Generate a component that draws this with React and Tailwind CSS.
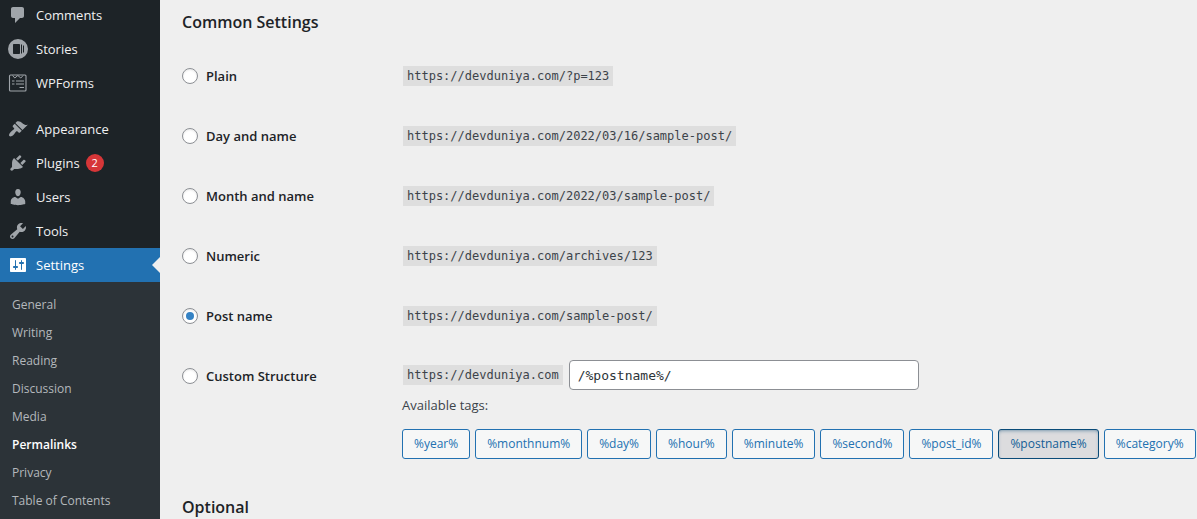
import React, { useState } from "react";

const icons = {
  comments: (
    <path d="M5 2h9c1.1 0 2 .9 2 2v7c0 1.1-.9 2-2 2h-2l-5 5v-5H5c-1.1 0-2-.9-2-2V4c0-1.1.9-2 2-2z" />
  ),
  stories: (
    <path
      fillRule="evenodd"
      d="M10 0a10 10 0 1 0 0 20a10 10 0 1 0 0-20zM6 5h5c.6 0 1 .4 1 1v8c0 .6-.4 1-1 1H6c-.6 0-1-.4-1-1V6c0-.6.4-1 1-1zM13 5.5h1v9h-1zM15 6.5h1v7h-1z"
    />
  ),
  wpforms: (
    <g fill="none" stroke="currentColor">
      <rect x="1.5" y="2" width="16.5" height="16" rx="1" strokeWidth="1.1" />
      <path d="M4.500 2.500l2.300 2.500 3-2.500 3 2.500 2.300-2.500" strokeWidth="1" />
      <path d="M4 8h2.500M8 8h8M4 11h2.500M8 11h8M11.500 14.500H16" strokeWidth="1.2" />
    </g>
  ),
  appearance: (
    <path d="M14.48 11.06L7.41 3.99l1.5-1.5c.5-.56 2.3-.47 3.51.32 1.21.8 1.43 1.28 2.91 2.1 1.18.64 2.45 1.26 4.45.85zm-.71.71L6.7 4.7 4.93 6.47c-.39.39-.39 1.02 0 1.41l1.06 1.06c.39.39.39 1.03 0 1.42-.6.6-1.43 1.11-2.21 1.69-.35.26-.7.53-1.01.84C1.43 14.23.4 16.08 1.4 17.07c.99 1 2.84-.03 4.18-1.36.31-.31.58-.66.85-1.02.57-.78 1.08-1.61 1.69-2.21.39-.39 1.02-.39 1.41 0l1.06 1.06c.39.39 1.02.39 1.41 0z" />
  ),
  plugins: (
    <path d="M13.11 4.36L9.87 7.6 8 5.73l3.24-3.24c.35-.34 1.05-.2 1.56.32.52.51.66 1.21.31 1.55zm-8 1.77l.91-1.12 9.01 9.01-1.19.84c-.71.71-2.63 1.16-3.82 1.16H6.14L4.9 17.26c-.59.59-1.54.59-2.12 0-.59-.58-.59-1.53 0-2.12l1.24-1.24v-3.88c0-1.13.4-3.19 1.09-3.89zm7.26 3.97l3.24-3.24c.34-.35 1.04-.21 1.55.31.52.51.66 1.21.31 1.55l-3.24 3.25z" />
  ),
  users: (
    <path d="M10 9.25c-2.27 0-2.73-3.44-2.73-3.44C7 4.02 7.82 2 9.97 2c2.16 0 2.98 2.02 2.71 3.81 0 0-.41 3.44-2.68 3.44zm0 2.57L12.72 10c2.39 0 4.52 2.33 4.52 4.53v2.49s-3.65 1.13-7.24 1.13c-3.65 0-7.24-1.13-7.24-1.13v-2.49c0-2.25 1.94-4.48 4.47-4.48z" />
  ),
  tools: (
    <path d="M16.68 9.77c-1.34 1.34-3.3 1.67-4.95.99l-5.41 6.52c-.99.99-2.59.99-3.58 0s-.99-2.59 0-3.57l6.52-5.42c-.68-1.65-.35-3.61.99-4.95 1.28-1.28 3.12-1.62 4.72-1.06l-2.89 2.89 2.82 2.82 2.86-2.87c.53 1.58.18 3.39-1.08 4.65zM3.81 16.21c.4.39 1.04.39 1.43 0 .4-.4.4-1.04 0-1.43-.39-.4-1.03-.4-1.43 0-.39.39-.39 1.03 0 1.43z" />
  ),
  settings: (
    <path d="M18 16V4c0-.55-.45-1-1-1H3c-.55 0-1 .45-1 1v12c0 .55.45 1 1 1h14c.55 0 1-.45 1-1zM8 11h1c.55 0 1 .45 1 1s-.45 1-1 1H8v1.500c0 .28-.22.5-.5.5s-.5-.22-.5-.5V13H6c-.55 0-1-.45-1-1s.45-1 1-1h1V5.500c0-.28.22-.5.5-.5s.5.22.5.5V11zm5-2h-1c-.55 0-1-.45-1-1s.45-1 1-1h1V5.500c0-.28.22-.5.5-.5s.5.22.5.5V7h1c.55 0 1 .45 1 1s-.45 1-1 1h-1v5.500c0 .28-.22.5-.5.5s-.5-.22-.5-.5V9z" />
  ),
};

const topMenu = [
  { key: "comments", label: "Comments" },
  { key: "stories", label: "Stories" },
  { key: "wpforms", label: "WPForms" },
];

const adminMenu = [
  { key: "appearance", label: "Appearance" },
  { key: "plugins", label: "Plugins", count: 2 },
  { key: "users", label: "Users" },
  { key: "tools", label: "Tools" },
  { key: "settings", label: "Settings", current: true },
];

const settingsMenu = [
  "General",
  "Writing",
  "Reading",
  "Discussion",
  "Media",
  "Permalinks",
  "Privacy",
  "Table of Contents",
];

const structures = [
  { id: "plain", label: "Plain", url: "https://devduniya.com/?p=123" },
  { id: "day", label: "Day and name", url: "https://devduniya.com/2022/03/16/sample-post/" },
  { id: "month", label: "Month and name", url: "https://devduniya.com/2022/03/sample-post/" },
  { id: "numeric", label: "Numeric", url: "https://devduniya.com/archives/123" },
  { id: "postname", label: "Post name", url: "https://devduniya.com/sample-post/" },
];

const tags = [
  "%year%",
  "%monthnum%",
  "%day%",
  "%hour%",
  "%minute%",
  "%second%",
  "%post_id%",
  "%postname%",
  "%category%",
];

function MenuItem({ item }) {
  return (
    <li>
      <a
        href="#"
        className={`relative flex h-[34px] items-center gap-2 pl-2 ${
          item.current ? "bg-[#2271b1] text-white" : "text-[#f0f0f1]"
        }`}
      >
        <svg
          viewBox="0 0 20 20"
          fill="currentColor"
          className={`size-5 shrink-0 ${item.current ? "text-white" : "text-[#a0a5aa]"}`}
        >
          {icons[item.key]}
        </svg>
        <span className="pt-0.5">{item.label}</span>
        {item.count && (
          <span className="-ml-0.5 flex size-[18px] items-center justify-center rounded-full bg-[#d63638] text-[11px] text-white">
            {item.count}
          </span>
        )}
        {item.current && (
          <span className="absolute right-0 top-1/2 -translate-y-1/2 border-8 border-l-0 border-transparent border-r-[#efefef]" />
        )}
      </a>
    </li>
  );
}

function Sidebar() {
  return (
    <nav className="w-40 shrink-0 overflow-hidden bg-[#1d2327] text-[13px]">
      <ul className="-mt-0.5 mb-3">
        {topMenu.map((item) => (
          <MenuItem key={item.key} item={item} />
        ))}
      </ul>
      <ul>
        {adminMenu.map((item) => (
          <MenuItem key={item.key} item={item} />
        ))}
      </ul>
      <ul className="bg-[#2c3338] pt-[9px] pb-2 text-xs">
        {settingsMenu.map((name) => (
          <li key={name}>
            <a
              href="#"
              className={`flex h-7 items-center px-3 ${
                name === "Permalinks" ? "font-semibold text-white" : "text-[#b4b8bc]"
              }`}
            >
              {name}
            </a>
          </li>
        ))}
      </ul>
    </nav>
  );
}

function StructureRadio({ id, label, selected, onSelect }) {
  return (
    <label htmlFor={id} className="flex h-5 items-center gap-2 text-[13px] font-semibold">
      <input
        type="radio"
        id={id}
        name="structure"
        checked={selected === id}
        onChange={() => onSelect(id)}
        className="flex size-4 shrink-0 appearance-none items-center justify-center rounded-full border border-[#8c8f94] bg-white shadow-[inset_0_1px_2px_rgba(0,0,0,0.1)] before:size-2 before:rounded-full checked:before:bg-[#3582c4]"
      />
      <span className="pt-0.5">{label}</span>
    </label>
  );
}

function Code({ children }) {
  return (
    <code className="ml-px flex h-5 w-fit items-center bg-[#dedede] px-1 font-['DejaVu_Sans_Mono',monospace] text-xs whitespace-nowrap text-[#3c434a]">
      {children}
    </code>
  );
}

function App() {
  const [selected, setSelected] = useState("postname");
  const [custom, setCustom] = useState("/%postname%/");

  const toggleTag = (tag) => {
    setCustom((prev) => (prev.includes(tag) ? prev.replace(`${tag}/`, "") : `${prev}${tag}/`));
    setSelected("custom");
  };

  return (
    <div className="flex h-screen overflow-hidden bg-[#efefef] font-['Open_Sans','Noto_Sans',sans-serif] text-[#1d2327]">
      <Sidebar />
      <main className="min-w-0 flex-1 overflow-hidden pt-2.5 pl-[22px]">
        <h2 className="text-base leading-6 font-semibold">Common Settings</h2>

        <table className="mt-3 w-full table-fixed">
          <tbody>
            {structures.map((row) => (
              <tr key={row.id} className="align-top">
                <th scope="row" className="w-[220px] py-5 text-left">
                  <StructureRadio {...row} selected={selected} onSelect={setSelected} />
                </th>
                <td className="py-5">
                  <Code>{row.url}</Code>
                </td>
              </tr>
            ))}
            <tr className="align-top">
              <th scope="row" className="w-[220px] py-5 text-left">
                <StructureRadio
                  id="custom"
                  label="Custom Structure"
                  selected={selected}
                  onSelect={setSelected}
                />
              </th>
              <td className="pt-3.5">
                <div className="flex items-center gap-1.5">
                  <Code>https://devduniya.com</Code>
                  <input
                    type="text"
                    aria-label="Custom Structure"
                    value={custom}
                    onChange={(e) => setCustom(e.target.value)}
                    className="h-[30px] w-[350px] rounded border border-[#8c8f94] bg-white px-2 font-['DejaVu_Sans_Mono',monospace] text-[13px] text-[#2c3338]"
                  />
                </div>
                <p className="mt-[5px] text-[13px] leading-5 text-[#3c434a]">Available tags:</p>
                <ul className="mt-3.5 flex gap-[5px]">
                  {tags.map((tag) => (
                    <li key={tag}>
                      <button
                        type="button"
                        onClick={() => toggleTag(tag)}
                        className={`h-[30px] rounded-[3px] border px-[11px] text-xs ${
                          custom.includes(tag)
                            ? "border-[#0a4b78] bg-[#dcdcde] text-[#135e96] shadow-[inset_0_2px_5px_-3px_#0a4b78]"
                            : "border-[#2271b1] bg-[#f6f7f7] text-[#2271b1]"
                        }`}
                      >
                        {tag}
                      </button>
                    </li>
                  ))}
                </ul>
              </td>
            </tr>
          </tbody>
        </table>

        <h2 className="mt-9 text-base leading-6 font-semibold">Optional</h2>
      </main>
    </div>
  );
}

export default App;
